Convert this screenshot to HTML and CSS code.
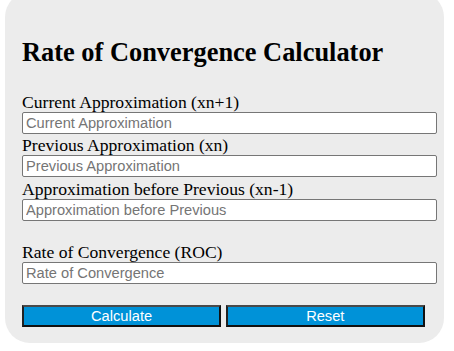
FILE: index.html
```html
<!DOCTYPE html>
<html lang="en">
<head>
    <meta charset="UTF-8">
    <meta name="viewport" content="width=device-width, initial-scale=1.0">
    <title>Rate of Convergence Calculator</title>
    <link rel="stylesheet" href="styles.css">
</head>
<body>
    <div class="calc">
        <h1 class="calc-title">Rate of Convergence Calculator</h1>

        <label class="field-label" for="xn1">Current Approximation (xn+1)</label>
        <input class="field-input" type="text" id="xn1" placeholder="Current Approximation">

        <label class="field-label" for="xn">Previous Approximation (xn)</label>
        <input class="field-input" type="text" id="xn" placeholder="Previous Approximation">

        <label class="field-label" for="xn0">Approximation before Previous (xn-1)</label>
        <input class="field-input" type="text" id="xn0" placeholder="Approximation before Previous">

        <div class="result-block">
            <label class="field-label" for="roc">Rate of Convergence (ROC)</label>
            <input class="field-input" type="text" id="roc" placeholder="Rate of Convergence">
        </div>

        <div class="buttons">
            <button class="calc-button" type="button">Calculate</button>
            <button class="calc-button" type="button">Reset</button>
        </div>
    </div>
</body>
</html>
```

FILE: styles.css
```css
body {
    margin: 0;
    background: #ffffff;
    font-family: "Liberation Serif", "Times New Roman", serif;
    color: #000000;
}
.calc {
    width: 439px;
    box-sizing: border-box;
    margin: -8px 0 0 5px;
    padding: 45px 7px 16px 17px;
    background: #ececec;
    border-radius: 25px;
}
.calc-title {
    margin: 0 0 23px 0;
    font-size: 26.4px;
    line-height: 30px;
    font-weight: bold;
}
.field-label {
    display: block;
    padding-top: 1.5px;
    font-size: 17.6px;
    line-height: 20px;
}
.field-input {
    display: block;
    width: 100%;
    height: 22px;
    box-sizing: border-box;
    margin: 0;
    padding: 1px 3px;
    border: 1px solid #767676;
    border-radius: 2px;
    background: #ffffff;
    font-family: "Liberation Sans", Arial, sans-serif;
    font-size: 14.67px;
    color: #000000;
}
.field-input::placeholder {
    color: #757575;
}
.result-block {
    margin-top: 20px;
}
.buttons {
    display: flex;
    gap: 4.5px;
    margin-top: 21px;
}
.calc-button {
    width: 48%;
    height: 22px;
    box-sizing: border-box;
    padding: 0;
    background: #0092d8;
    border-width: 2px;
    border-style: solid;
    border-color: #4a4a4a #111111 #111111 #222222;
    color: #ffffff;
    font-family: "Liberation Sans", Arial, sans-serif;
    font-size: 14.67px;
    line-height: 18px;
    cursor: pointer;
}
```
